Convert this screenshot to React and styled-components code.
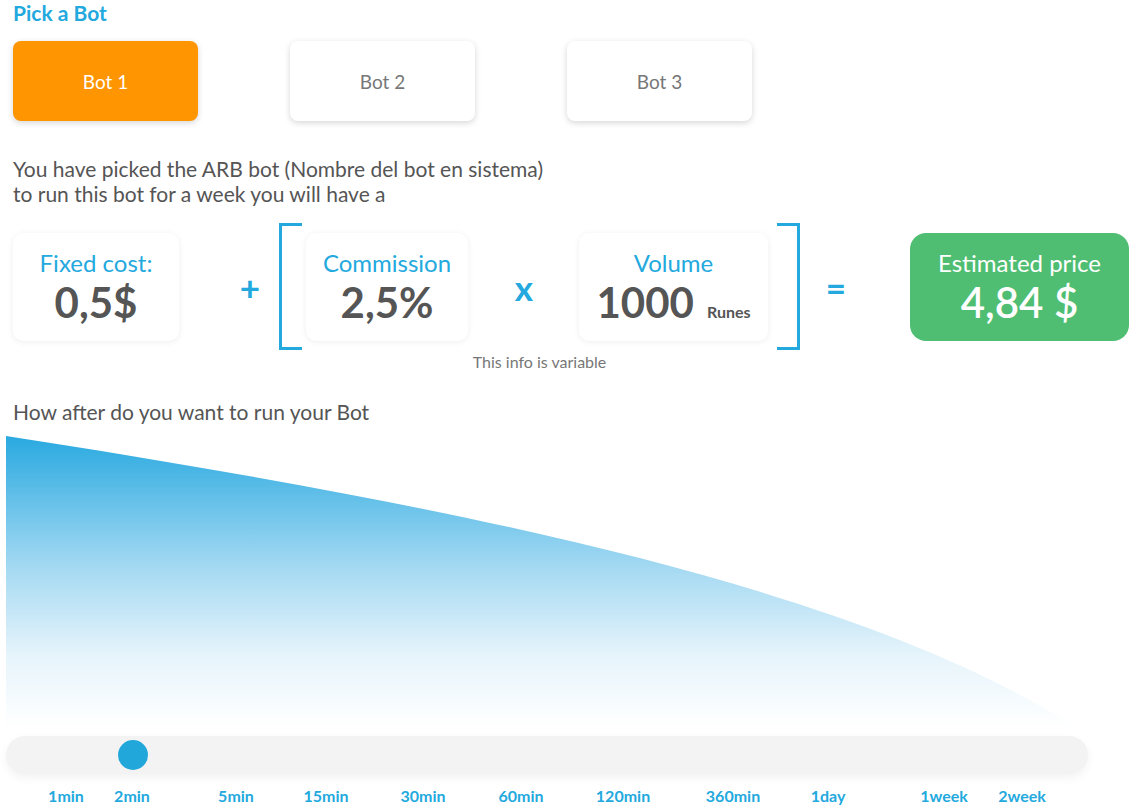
import React from 'react';
import styled, { createGlobalStyle } from 'styled-components';

const BLUE = '#23a9de';

const BOTS = [
  { id: 1, name: 'Bot 1', active: true },
  { id: 2, name: 'Bot 2' },
  { id: 3, name: 'Bot 3' },
];

const STEPS = [
  { label: '1min', x: 60 },
  { label: '2min', x: 126 },
  { label: '5min', x: 230 },
  { label: '15min', x: 320 },
  { label: '30min', x: 417 },
  { label: '60min', x: 515 },
  { label: '120min', x: 617 },
  { label: '360min', x: 727 },
  { label: '1day', x: 822 },
  { label: '1week', x: 938 },
  { label: '2week', x: 1016 },
];

const GlobalStyle = createGlobalStyle`
  body {
    margin      : 0;
    background  : #fff;
    font-family : 'Lato', 'Open Sans', sans-serif;
  }
`;

const Page = styled.div`
  width      : 1139px;
  padding    : 1px 0 0 13px;
  box-sizing : border-box;
  color      : #555;
`;

const Title = styled.div`
  font-size   : 21px;
  line-height : 24px;
  font-weight : 700;
  color       : ${BLUE};
`;

const BotRow = styled.div`
  display               : grid;
  grid-template-columns : repeat(3, 185px);
  column-gap            : 92px;
  margin-top            : 16px;
`;

const BotButton = styled.div`
  height          : 80px;
  display         : flex;
  align-items     : center;
  justify-content : center;
  border-radius   : 8px;
  font-size       : 19px;
  background      : ${p => p.$active ? '#ff9500' : '#fff'};
  color           : ${p => p.$active ? '#fff' : '#777'};
  box-shadow      : 0 2px 6px rgba(0, 0, 0, 0.16);
`;

const Intro = styled.div`
  margin-top  : 35px;
  font-size   : 21px;
  line-height : 25px;
  color       : #555;
`;

const Formula = styled.div`
  display     : flex;
  align-items : flex-start;
  margin-top  : 17px;
`;

const Slot = styled.div`
  height      : 127px;
  display     : flex;
  align-items : center;
`;

const Card = styled.div`
  width         : ${p => p.$w}px;
  height        : 108px;
  margin-left   : ${p => p.$ml || 0}px;
  padding-top   : 16px;
  box-sizing    : border-box;
  border-radius : 10px;
  background    : #fff;
  box-shadow    : 0 1px 6px rgba(0, 0, 0, 0.07);
  text-align    : center;
`;

const CardLabel = styled.div`
  font-size   : 24px;
  line-height : 28px;
  color       : ${BLUE};
`;

const CardValue = styled.div`
  margin-top  : 2px;
  font-size   : 42px;
  line-height : 46px;
  font-weight : 700;
  color       : #555;
`;

const Unit = styled.span`
  margin-left : 13px;
  font-size   : 16px;
  font-weight : 700;
`;

const Operator = styled.div`
  width       : 40px;
  margin      : 0 ${p => p.$mr}px 0 ${p => p.$ml}px;
  text-align  : center;
  font-size   : 35px;
  font-weight : 700;
  color       : ${BLUE};
`;

const Group = styled.div`
  display        : flex;
  flex-direction : column;
  align-items    : center;
`;

const GroupRow = styled.div`
  display     : flex;
  align-items : center;
  height      : 127px;
`;

const Bracket = styled.div`
  width      : 23px;
  height     : 127px;
  box-sizing : border-box;
  border     : 3px solid ${BLUE};
  ${p => p.$right
    ? 'border-left: none; margin-left: 9px;'
    : 'border-right: none;'}
`;

const Caption = styled.div`
  margin-top  : 2px;
  font-size   : 16px;
  line-height : 19px;
  color       : #777;
`;

const PriceCard = styled.div`
  width         : 219px;
  height        : 108px;
  padding-top   : 16px;
  box-sizing    : border-box;
  border-radius : 16px;
  background    : #4fbe72;
  color         : #fff;
  text-align    : center;
`;

const PriceLabel = styled.div`
  font-size   : 24px;
  line-height : 28px;
`;

const PriceValue = styled.div`
  margin-top  : 2px;
  font-size   : 42px;
  line-height : 46px;
  font-weight : 600;
`;

const Question = styled.div`
  margin-top  : 28px;
  font-size   : 21px;
  line-height : 25px;
  color       : #555;
`;

const Chart = styled.div`
  margin      : 12px 0 0 -7px;
  height      : 292px;
  line-height : 0;
`;

const Track = styled.div`
  position      : relative;
  width         : 1082px;
  height        : 38px;
  margin        : 8px 0 0 -7px;
  border-radius : 19px;
  background    : #f3f3f3;
  box-shadow    : 0 4px 10px rgba(0, 0, 0, 0.05);
`;

const Knob = styled.div`
  position      : absolute;
  top           : 4px;
  left          : ${p => p.$x - 15}px;
  width         : 30px;
  height        : 30px;
  border-radius : 50%;
  background    : #21a7da;
`;

const Labels = styled.div`
  position : relative;
  width    : 1082px;
  height   : 20px;
  margin   : 12px 0 0 -7px;
`;

const StepLabel = styled.span`
  position    : absolute;
  left        : ${p => p.$x}px;
  transform   : translateX(-50%);
  font-size   : 16px;
  line-height : 19px;
  font-weight : 700;
  color       : ${BLUE};
`;

const App = () => (
  <Page>
    <GlobalStyle />
    <Title>Pick a Bot</Title>

    <BotRow>
      {BOTS.map(b =>
        <BotButton key={b.id} $active={b.active}>{b.name}</BotButton>
      )}
    </BotRow>

    <Intro>
      You have picked the ARB bot (Nombre del bot en sistema)
      <br />
      to run this bot for a week you will have a
    </Intro>

    <Formula>
      <Slot>
        <Card $w={166}>
          <CardLabel>Fixed cost:</CardLabel>
          <CardValue>0,5$</CardValue>
        </Card>
      </Slot>

      <Slot>
        <Operator $ml={51} $mr={9}>+</Operator>
      </Slot>

      <Group>
        <GroupRow>
          <Bracket />
          <Card $w={162} $ml={4}>
            <CardLabel>Commission</CardLabel>
            <CardValue>2,5%</CardValue>
          </Card>
          <Operator $ml={36} $mr={35}>x</Operator>
          <Card $w={189}>
            <CardLabel>Volume</CardLabel>
            <CardValue>
              1000<Unit>Runes</Unit>
            </CardValue>
          </Card>
          <Bracket $right />
        </GroupRow>
        <Caption>This info is variable</Caption>
      </Group>

      <Slot>
        <Operator $ml={16} $mr={54}>=</Operator>
      </Slot>

      <Slot>
        <PriceCard>
          <PriceLabel>Estimated price</PriceLabel>
          <PriceValue>4,84 $</PriceValue>
        </PriceCard>
      </Slot>
    </Formula>

    <Question>How after do you want to run your Bot</Question>

    <Chart>
      <svg width="1082" height="292" viewBox="0 0 1082 292">
        <defs>
          <linearGradient id="fade" x1="0" y1="0" x2="0" y2="1">
            <stop offset="0"    stopColor="#29a9e0" />
            <stop offset="0.45" stopColor="#a4d9f2" />
            <stop offset="0.75" stopColor="#e6f4fb" />
            <stop offset="1"    stopColor="#ffffff" />
          </linearGradient>
        </defs>
        <path
          d="M0 0 C 450 70 850 150 1071 292 L 0 292 Z"
          fill="url(#fade)"
        />
      </svg>
    </Chart>

    <Track>
      <Knob $x={127} />
    </Track>

    <Labels>
      {STEPS.map(s =>
        <StepLabel key={s.label} $x={s.x}>{s.label}</StepLabel>
      )}
    </Labels>
  </Page>
);

export default App;
